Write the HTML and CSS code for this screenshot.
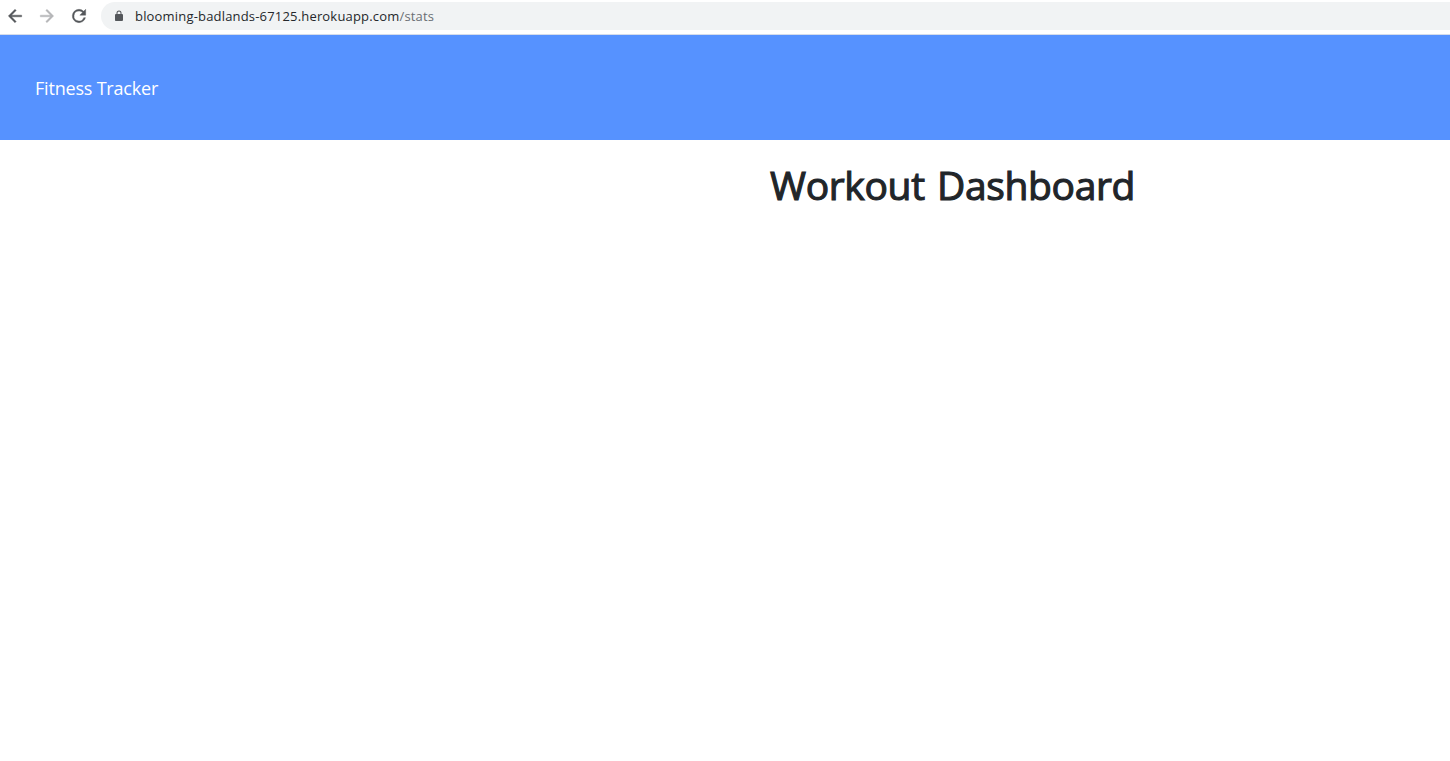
FILE: index.html
```html
<!DOCTYPE html>
<html lang="en">
<head>
<meta charset="utf-8">
<title>Fitness Tracker</title>
<link rel="stylesheet" href="styles.css">
</head>
<body>
<div class="toolbar">
  <svg class="icon" viewBox="0 0 24 24"><path d="M20 11H7.83l5.59-5.59L12 4l-8 8 8 8 1.41-1.41L7.83 13H20v-2z"/></svg>
  <svg class="icon icon-disabled" viewBox="0 0 24 24"><path d="M12 4l-1.41 1.41L16.17 11H4v2h12.17l-5.58 5.59L12 20l8-8z"/></svg>
  <svg class="icon" viewBox="0 0 24 24"><path d="M17.65 6.35A7.96 7.96 0 0 0 12 4a8 8 0 1 0 7.73 10h-2.08A6 6 0 1 1 12 6c1.66 0 3.14.69 4.22 1.78L13 11h7V4l-2.35 2.35z"/></svg>
  <div class="address">
    <svg class="lock" viewBox="0 0 24 24"><path d="M18 8h-1V6A5 5 0 0 0 7 6v2H6a2 2 0 0 0-2 2v10c0 1.100.9 2 2 2h12a2 2 0 0 0 2-2V10a2 2 0 0 0-2-2zM9 6a3 3 0 0 1 6 0v2H9V6z"/></svg>
    <span class="url">blooming-badlands-67125.herokuapp.com<span class="path">/stats</span></span>
  </div>
</div>
<nav class="navbar"><a class="brand">Fitness Tracker</a></nav>
<main class="main"><h1 class="title">Workout Dashboard</h1></main>
</body>
</html>
```
FILE: styles.css
```css
* { box-sizing: border-box; }
body { margin: 0; height: 761px; overflow: hidden; background: #fff; font-family: "Open Sans", "Noto Sans", sans-serif; color: #212529; }
.toolbar { display: flex; align-items: center; gap: 12px; height: 35px; padding: 0 0 3px 5px; border-bottom: 1px solid #d5dcea; }
.icon { width: 20px; height: 20px; flex: none; fill: #54575b; stroke: #54575b; stroke-width: .5; }
.icon-disabled { fill: #b5b6b8; stroke: #b5b6b8; }
.address { display: flex; align-items: center; flex: 1; height: 28px; padding-left: 12px; border-radius: 14px 0 0 14px; background: #f1f3f4; }
.lock { width: 12px; height: 12px; fill: #54575b; }
.url { margin-left: 10px; font-size: 13px; line-height: 20px; letter-spacing: .18px; white-space: nowrap; color: #25282c; }
.path { color: #6a6e73; }
.navbar { display: flex; align-items: center; height: 105px; padding: 2px 0 0 35px; background: #5692ff; }
.brand { font-size: 18px; line-height: 27px; letter-spacing: -.2px; color: #fff; }
.main { padding: 21px 0 0 770px; }
.title { margin: 0; font-size: 39px; font-weight: 400; line-height: 48px; letter-spacing: -.35px; word-spacing: 2.5px; white-space: nowrap; -webkit-text-stroke: 1.1px #212529; }
```
